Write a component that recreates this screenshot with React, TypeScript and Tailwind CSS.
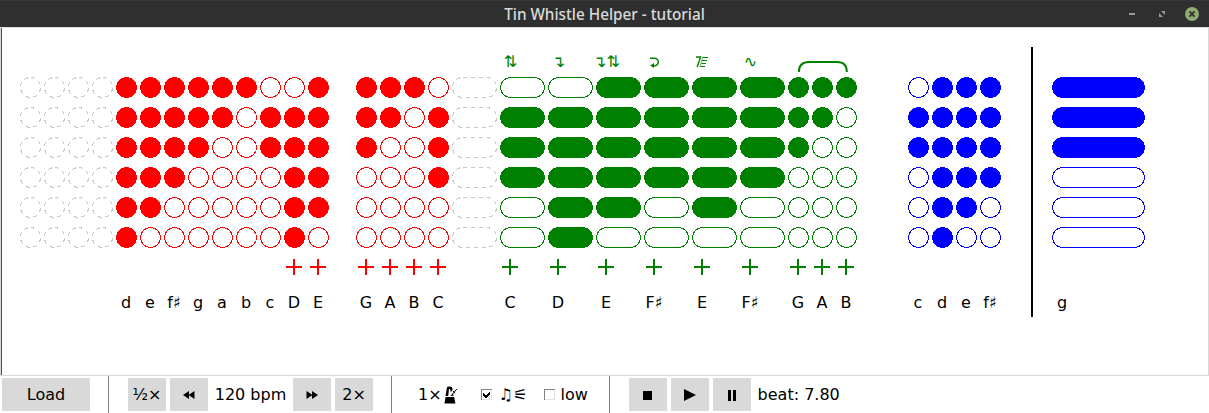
import type { ReactNode } from "react";

type Ornament = "up-down" | "down" | "down-up" | "curl" | "strike" | "wave";
type Note = {
  name?: string;
  holes?: string;
  beats?: number;
  color?: string;
  high?: boolean;
  mark?: Ornament;
  slur?: boolean;
  gap?: boolean;
};

const RED = "#ff0000";
const GREEN = "#008000";
const BLUE = "#0000ff";

const rest = (beats = 1): Note => ({ beats });
const gap = (beats = 1): Note => ({ beats, gap: true });
const red = (name: string, holes: string, high = false): Note => ({ name, holes, high, color: RED });
const green = (name: string, holes: string, beats: number, mark?: Ornament, slur = false): Note => ({
  name, holes, beats, high: true, color: GREEN, mark, slur,
});
const blue = (name: string, holes: string, beats = 1): Note => ({ name, holes, beats, color: BLUE });

const firstPart: Note[] = [
  rest(), rest(), rest(), rest(),
  red("d", "111111"), red("e", "111110"), red("f♯", "111100"), red("g", "111000"),
  red("a", "110000"), red("b", "100000"), red("c", "011000"), red("D", "011111", true), red("E", "111110", true),
  gap(),
  red("G", "111000", true), red("A", "110000", true), red("B", "100000", true), red("C", "011100", true),
  rest(2),
  green("C", "011100", 2, "up-down"),
  green("D", "011111", 2, "down"),
  green("E", "111110", 2, "down-up"),
  green("F♯", "111100", 2, "curl"),
  green("E", "111110", 2, "strike"),
  green("F♯", "111100", 2, "wave"),
  green("G", "111000", 1, undefined, true),
  green("A", "110000", 1),
  green("B", "100000", 1),
  gap(2),
  blue("c", "011000"), blue("d", "111111"), blue("e", "111110"), blue("f♯", "111100"),
];
const secondPart: Note[] = [blue("g", "111000", 4)];

function Mark({ kind }: { kind: Ornament }) {
  if (kind === "curl")
    return (
      <svg width="12" height="14" className="ml-[1px]" fill="none" stroke={GREEN} strokeWidth="1.5">
        <path d="M1 3.2H5.5A3.8 3.8 0 0 1 5.5 10.8H3" />
        <path d="M1.2 10.5L5 8V13Z" fill={GREEN} stroke="none" />
      </svg>
    );
  if (kind === "strike")
    return (
      <svg width="14" height="14" className="-ml-[1px]" fill="none" stroke={GREEN}>
        <path d="M1 2H5.6L2.2 12" strokeWidth="1.4" />
        <path d="M8 2.5H13M7 5.5H12M6.5 8.5H11M5.5 11.5H10" strokeWidth="1.1" />
        <path d="M7.8 2L5 12" strokeWidth="0.6" />
      </svg>
    );
  const glyph = kind === "up-down" ? "⇅" : kind === "down" ? "↴" : kind === "down-up" ? "↴⇅" : "∿";
  return <span>{glyph}</span>;
}

function Hole({ width, filled, color }: { width: number; filled: boolean; color?: string }) {
  return (
    <svg width={width} height="21" shapeRendering="crispEdges" className="block">
      <rect
        x="0.5" y="0.5" width={width - 1} height="20" rx="10"
        fill={filled && color ? color : "white"}
        stroke={color ?? "#c8c8c8"}
        strokeDasharray={color ? undefined : "4 4"}
      />
    </svg>
  );
}

function NoteColumn({ note }: { note: Note }) {
  const beats = note.beats ?? 1;
  const width = 24 * beats;
  if (note.gap) return <div className="shrink-0" style={{ width }} />;
  const holes = note.holes ?? "000000";
  return (
    <div className="flex shrink-0 flex-col" style={{ width }}>
      <div className="flex h-[30px] w-[21px] items-center justify-center whitespace-nowrap text-[16px] leading-[30px] text-[#008000]">
        {note.mark && <Mark kind={note.mark} />}
        {note.slur && (
          <svg width="21" height="30" className="overflow-visible" fill="none" stroke={GREEN} strokeWidth="2">
            <path d="M10.8 25Q11 15 21 15H49Q59 15 58.8 25" />
          </svg>
        )}
      </div>
      <div className="flex flex-col gap-[9px]">
        {holes.split("").map((h, i) => (
          <Hole key={i} width={width - 3} filled={h === "1"} color={note.color} />
        ))}
      </div>
      <div className="mt-[11px] h-4 w-5 pl-[2px]">
        {note.high && (
          <svg width="16" height="16" stroke={note.color} strokeWidth="2" shapeRendering="crispEdges" className="block">
            <path d="M8 0V16M0 8H16" />
          </svg>
        )}
      </div>
      <div className="mt-[18px] flex w-5 justify-center whitespace-nowrap leading-5">{note.name}</div>
    </div>
  );
}

function Button({ children, className = "w-[38px]" }: { children: ReactNode; className?: string }) {
  return (
    <button className={`flex h-[33px] shrink-0 items-center justify-center bg-[#d9d9d9] pt-px ${className}`}>
      {children}
    </button>
  );
}

function Separator({ className }: { className: string }) {
  return <div className={`h-[37px] w-px shrink-0 bg-[#808080] ${className}`} />;
}

function Check({ checked = false }: { checked?: boolean }) {
  return (
    <svg width="11" height="11" shapeRendering="crispEdges" className="block shrink-0">
      <rect width="11" height="11" fill="#e3e3e3" />
      <path d="M0 .5H11M.5 0V11" stroke="#828282" />
      <rect x="1" y="1" width="9" height="9" fill="white" />
      {checked && <path d="M2 4V7L4 9H5L9 5V2L4.5 6.5Z" fill="black" />}
    </svg>
  );
}

function Metronome() {
  return (
    <svg width="14" height="18" viewBox="0 0 14 18" className="block shrink-0">
      <path d="M1.5 10L3 1Q5 -.2 8 1L8.6 4L6.8 6L6 3H5L4.2 10Z" />
      <path d="M7 10L12.8 3M9 5L11 7.2" stroke="black" strokeWidth="1" />
      <path d="M8.8 7L9.6 10H8Z" />
      <path d="M1.6 11H10.2L11.4 17.5H.4Z" />
    </svg>
  );
}

export default function App() {
  return (
    <div
      className="flex h-[413px] w-[1209px] flex-col overflow-hidden bg-white text-[16px] text-black"
      style={{ fontFamily: '"DejaVu Sans", sans-serif' }}
    >
      <header className="grid h-[27px] shrink-0 grid-cols-[1fr_auto_1fr] items-center border-t border-[#383838] bg-[#2f2f2f]">
        <span />
        <h1
          className="text-[15.3px] leading-[26px] font-medium text-[#dadada]"
          style={{ fontFamily: '"Noto Sans", sans-serif' }}
        >
          Tin Whistle Helper - tutorial
        </h1>
        <div className="flex items-center justify-end pr-[10px]">
          <svg width="6" height="2" className="mr-6"><rect width="6" height="2" fill="#989898" /></svg>
          <svg width="6" height="6" className="mr-5" fill="#989898">
            <path d="M2 0H6V4ZM0 2L4 6H0Z" />
          </svg>
          <svg width="14" height="14">
            <circle cx="7" cy="7" r="7" fill="#92ab74" />
            <path d="M4.4 4.4L9.6 9.6M9.6 4.4L4.4 9.6" stroke="#303030" strokeWidth="1.8" />
          </svg>
        </div>
      </header>
      <main className="h-[349px] shrink-0 border border-[#d9d9d9]">
        <div className="flex h-[347px] border-l border-[#ff0000] pl-[18px] pt-[19px]">
          {firstPart.map((n, i) => <NoteColumn key={i} note={n} />)}
          <div className="mr-[19px] ml-[27px] h-[270px] w-[2px] shrink-0 bg-black" />
          {secondPart.map((n, i) => <NoteColumn key={i} note={n} />)}
        </div>
      </main>
      <footer className="flex h-[37px] items-start pl-[2px] leading-5">
        <div className="flex h-[37px] items-center">
          <Button className="w-[88px]">Load</Button>
          <Separator className="mr-[19px] ml-[18px]" />
          <div className="flex items-center gap-1">
            <Button>½×</Button>
            <Button>
              <svg width="12" height="8"><path d="M6 0V8L0 4ZM11.5 0V8L5.5 4Z" /></svg>
            </Button>
            <span className="w-[77px] text-center">120 bpm</span>
            <Button>
              <svg width="12" height="8"><path d="M.5 0V8L6.5 4ZM6 0V8L12 4Z" /></svg>
            </Button>
            <Button>2×</Button>
          </div>
          <Separator className="mr-[26px] ml-[18px]" />
          <span>1×</span>
          <div className="mr-[23px] ml-[2px]"><Metronome /></div>
          <label className="flex w-[63px] items-center gap-[7px]"><Check checked /><span>♫⚟</span></label>
          <label className="flex w-[65px] items-center gap-[6px]"><Check /><span>low</span></label>
          <Separator className="mr-[19px]" />
          <div className="flex items-center gap-1">
            <Button><svg width="9" height="9"><rect width="9" height="9" /></svg></Button>
            <Button><svg width="12" height="12"><path d="M0 0L12 6L0 12Z" /></svg></Button>
            <Button><svg width="8" height="11"><path d="M0 0H3V11H0ZM5 0H8V11H5Z" /></svg></Button>
            <span className="ml-[3px]">beat: 7.80</span>
          </div>
        </div>
      </footer>
    </div>
  );
}
